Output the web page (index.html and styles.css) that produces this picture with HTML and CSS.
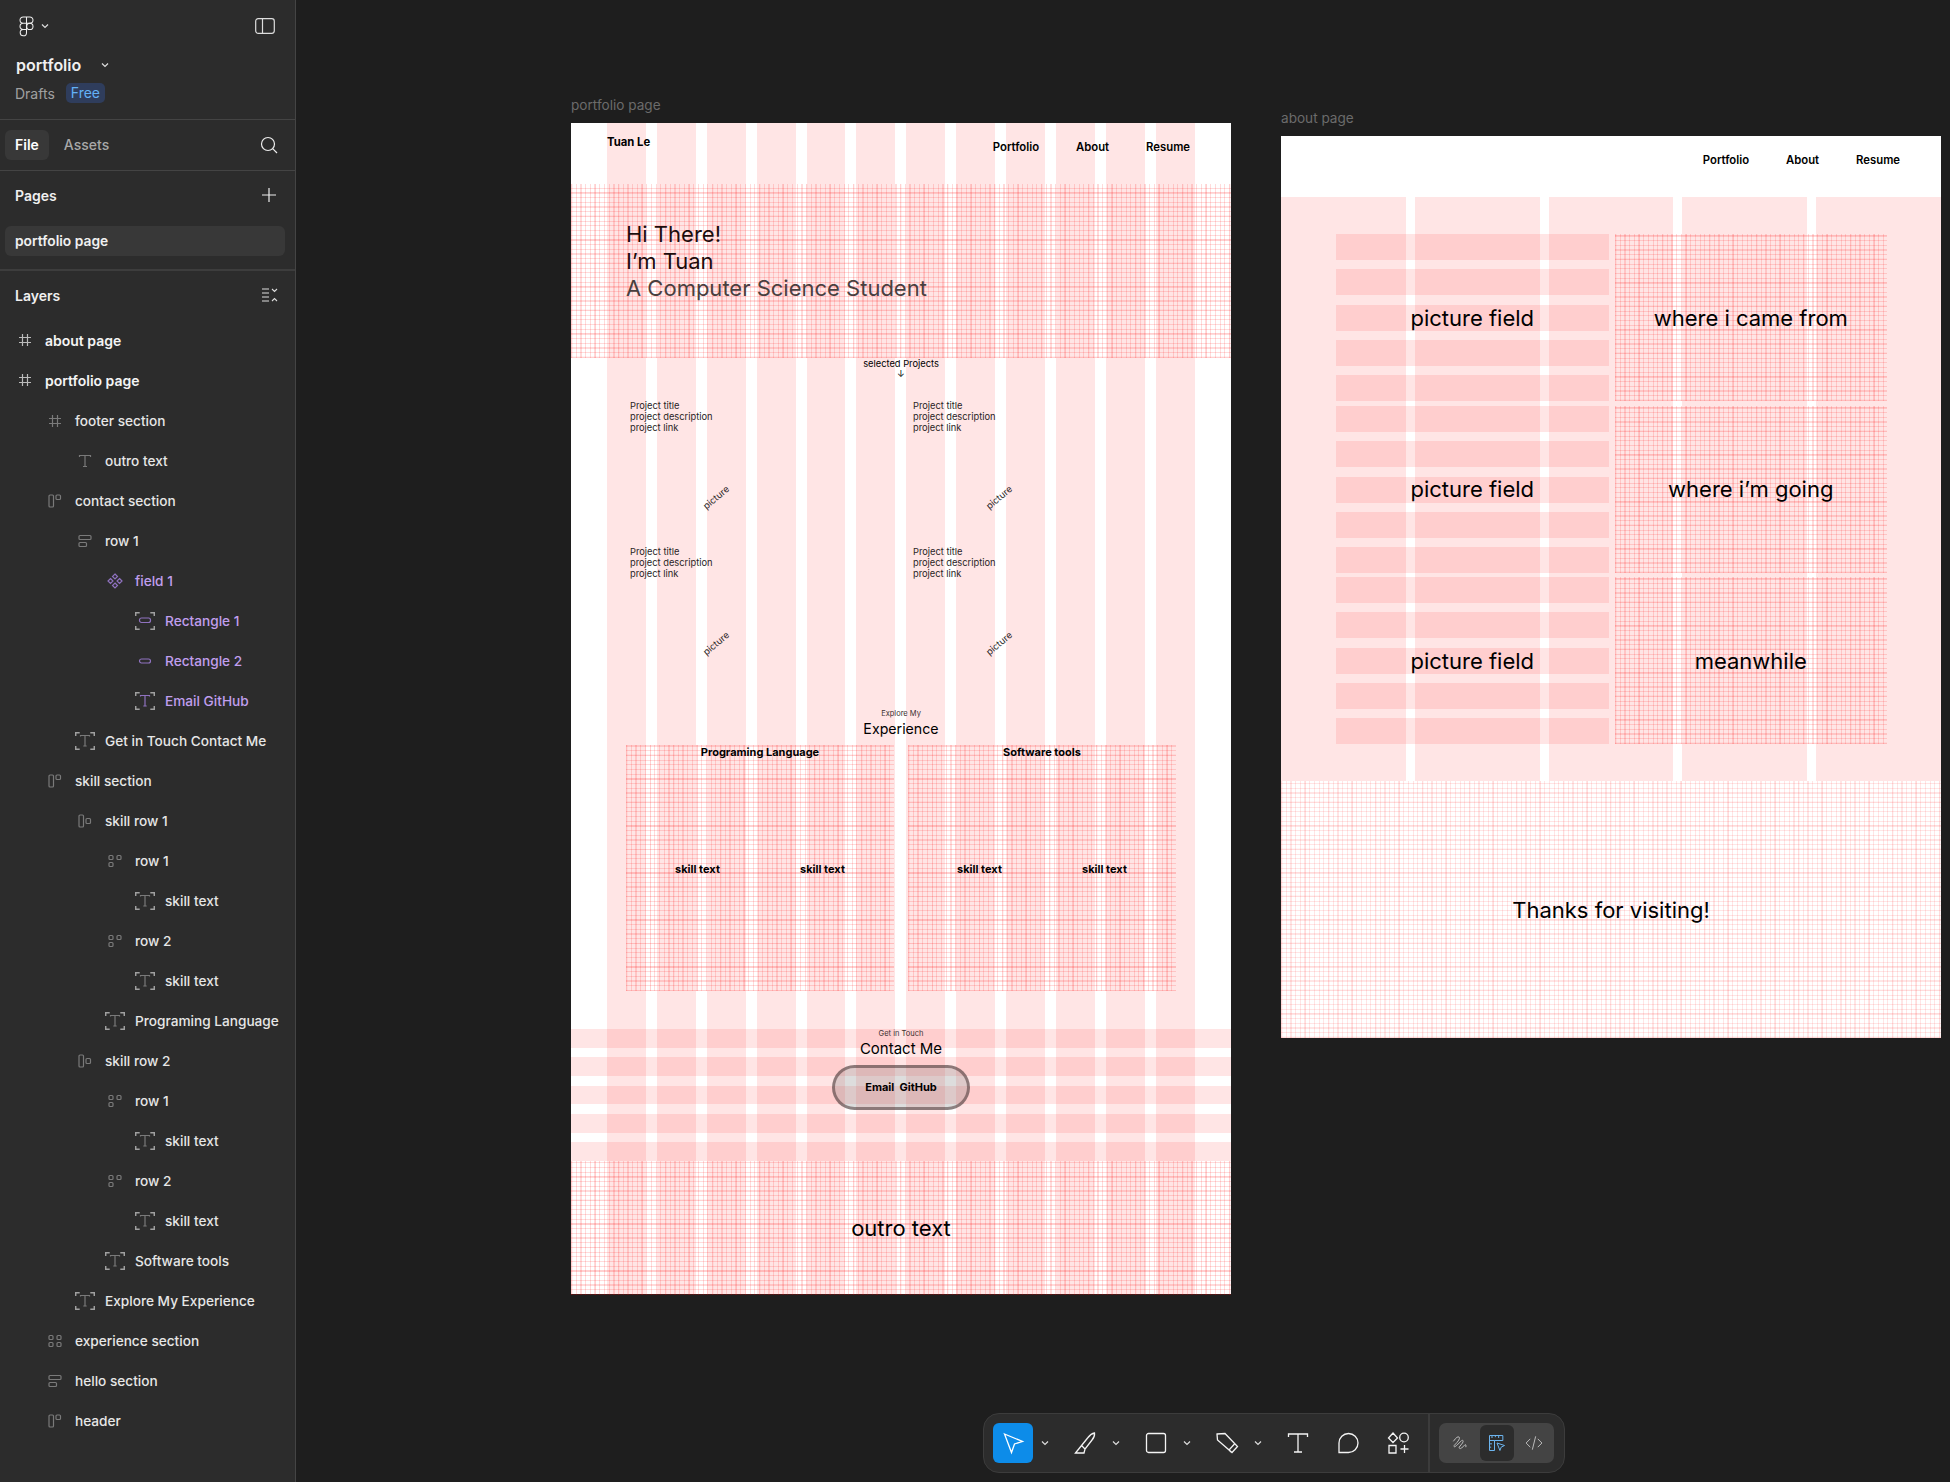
FILE: index.html
```html
<!DOCTYPE html>
<html lang="en">
<head>
    <meta charset="UTF-8">
    <title>portfolio - Figma</title>
    <link rel="stylesheet" href="styles.css">
</head>
<body>
    <svg class="sprite" width="0" height="0">
        <symbol id="i-frame" viewBox="0 0 20 20"><path d="M7.500 4v12M12.500 4v12M4 7.500h12M4 12.500h12"/></symbol>
        <symbol id="i-text" viewBox="0 0 20 20"><path d="M4.500 6V4.500h11V6M10 4.500v11M8 15.500h4"/></symbol>
        <symbol id="i-btext" viewBox="0 0 20 20"><path class="bk" d="M.7 5V1.700h4M15.300 1.700h4V5M.7 15v3.300h4M19.300 15v3.300h-4"/><path d="M5.500 5.500v-1h9v1M10 4.500v10.500M8.300 15h3.400"/></symbol>
        <symbol id="i-hstack" viewBox="0 0 20 20"><rect x="4" y="4" width="4.500" height="12" rx="1"/><rect x="11" y="4" width="4.500" height="4.500" rx="1"/></symbol>
        <symbol id="i-hmid" viewBox="0 0 20 20"><rect x="4" y="4" width="4.500" height="12" rx="1"/><rect x="11" y="7.500" width="4.500" height="5" rx="1"/></symbol>
        <symbol id="i-vstack" viewBox="0 0 20 20"><rect x="4" y="4.500" width="12" height="4" rx="1"/><rect x="4" y="11.500" width="7.500" height="4" rx="1"/></symbol>
        <symbol id="i-grid3" viewBox="0 0 20 20"><rect x="4" y="4.500" width="4" height="4" rx="1"/><rect x="12" y="4.500" width="4" height="4" rx="1"/><rect x="4" y="11.500" width="4" height="4" rx="1"/></symbol>
        <symbol id="i-grid4" viewBox="0 0 20 20"><rect x="4" y="4.500" width="4" height="4" rx="1"/><rect x="12" y="4.500" width="4" height="4" rx="1"/><rect x="4" y="11.500" width="4" height="4" rx="1"/><rect x="12" y="11.500" width="4" height="4" rx="1"/></symbol>
        <symbol id="i-comp" viewBox="0 0 20 20"><path d="M10 3l2.500 2.500L10 8 7.500 5.500zM10 12l2.500 2.500L10 17l-2.500-2.500zM5.500 7.500L8 10l-2.500 2.500L3 10zM14.500 7.500L17 10l-2.500 2.500L12 10z"/></symbol>
        <symbol id="i-brect" viewBox="0 0 20 20"><path class="bk" d="M.7 5V1.700h4M15.300 1.700h4V5M.7 15v3.300h4M19.300 15v3.300h-4"/><rect x="4.500" y="7" width="11" height="4.500" rx="2"/></symbol>
        <symbol id="i-pill" viewBox="0 0 20 20"><rect x="4.500" y="8" width="11" height="4" rx="2"/></symbol>
    </svg>

    <aside class="sidebar">
        <div class="file-head">
            <div class="logo-row">
                <svg class="figma-logo" viewBox="0 0 16 22">
                    <path d="M8 1H4.500a3.300 3.300 0 0 0 0 6.600H8zM8 1h3.500a3.300 3.300 0 0 1 0 6.600H8zM8 7.600H4.500a3.300 3.300 0 0 0 0 6.600H8zM8 14.200H4.500A3.300 3.300 0 1 0 8 17.500z"/>
                    <circle cx="11.500" cy="10.900" r="3.300"/>
                </svg>
                <svg class="chev" viewBox="0 0 8 6"><path d="M1 1.500l3 3 3-3"/></svg>
                <svg class="panel-icon" viewBox="0 0 20 16"><rect x=".7" y=".7" width="18.600" height="14.600" rx="2.500"/><path d="M7.500 .7v14.600"/></svg>
            </div>
            <div class="file-name">portfolio <svg class="chev" viewBox="0 0 8 6"><path d="M1 1.500l3 3 3-3"/></svg></div>
            <div class="file-meta"><span>Drafts</span><span class="badge">Free</span></div>
        </div>

        <div class="tabs">
            <span class="tab active">File</span>
            <span class="tab">Assets</span>
            <svg class="search" viewBox="0 0 18 18"><circle cx="8" cy="8" r="6.500"/><path d="M12.700 12.700l4.300 4.300"/></svg>
        </div>

        <div class="pages">
            <div class="panel-title">Pages <svg class="plus" viewBox="0 0 14 14"><path d="M7 0v14M0 7h14"/></svg></div>
            <div class="page-item">portfolio page</div>
        </div>

        <div class="layers">
            <div class="panel-title">Layers
                <svg class="collapse" viewBox="0 0 16 14"><path d="M0 1h7M0 5h7M0 9h7M0 13h7M10 1l2.500 2.500L15 1M10 13l2.500-2.500L15 13"/></svg>
            </div>
            <ul class="layer-list">
                <li class="layer lv0 top"><svg><use href="#i-frame"/></svg>about page</li>
                <li class="layer lv0 top"><svg><use href="#i-frame"/></svg>portfolio page</li>
                <li class="layer lv1"><svg><use href="#i-frame"/></svg>footer section</li>
                <li class="layer lv2"><svg><use href="#i-text"/></svg>outro text</li>
                <li class="layer lv1"><svg><use href="#i-hstack"/></svg>contact section</li>
                <li class="layer lv2"><svg><use href="#i-vstack"/></svg>row 1</li>
                <li class="layer lv3 purple"><svg><use href="#i-comp"/></svg>field 1</li>
                <li class="layer lv4 purple"><svg><use href="#i-brect"/></svg>Rectangle 1</li>
                <li class="layer lv4 purple"><svg><use href="#i-pill"/></svg>Rectangle 2</li>
                <li class="layer lv4 purple"><svg><use href="#i-btext"/></svg>Email GitHub</li>
                <li class="layer lv2"><svg><use href="#i-btext"/></svg>Get in Touch Contact Me</li>
                <li class="layer lv1"><svg><use href="#i-hstack"/></svg>skill section</li>
                <li class="layer lv2"><svg><use href="#i-hmid"/></svg>skill row 1</li>
                <li class="layer lv3"><svg><use href="#i-grid3"/></svg>row 1</li>
                <li class="layer lv4"><svg><use href="#i-btext"/></svg>skill text</li>
                <li class="layer lv3"><svg><use href="#i-grid3"/></svg>row 2</li>
                <li class="layer lv4"><svg><use href="#i-btext"/></svg>skill text</li>
                <li class="layer lv3"><svg><use href="#i-btext"/></svg>Programing Language</li>
                <li class="layer lv2"><svg><use href="#i-hmid"/></svg>skill row 2</li>
                <li class="layer lv3"><svg><use href="#i-grid3"/></svg>row 1</li>
                <li class="layer lv4"><svg><use href="#i-btext"/></svg>skill text</li>
                <li class="layer lv3"><svg><use href="#i-grid3"/></svg>row 2</li>
                <li class="layer lv4"><svg><use href="#i-btext"/></svg>skill text</li>
                <li class="layer lv3"><svg><use href="#i-btext"/></svg>Software tools</li>
                <li class="layer lv2"><svg><use href="#i-btext"/></svg>Explore My Experience</li>
                <li class="layer lv1"><svg><use href="#i-grid4"/></svg>experience section</li>
                <li class="layer lv1"><svg><use href="#i-vstack"/></svg>hello section</li>
                <li class="layer lv1"><svg><use href="#i-hstack"/></svg>header</li>
            </ul>
        </div>
    </aside>

    <main class="canvas">
        <!-- portfolio frame -->
        <section class="frame frame-portfolio">
            <div class="frame-label">portfolio page</div>
            <header class="site-head">
                <div class="brand">Tuan Le</div>
                <nav class="site-nav"><span>Portfolio</span><span>About</span><span>Resume</span></nav>
            </header>
            <div class="hello fine-grid">
                <div>Hi There!</div>
                <div>I’m Tuan</div>
                <div class="hello-sub">A Computer Science Student</div>
            </div>
            <div class="selected">
                <div>selected Projects</div>
                <div class="arrow">↓</div>
            </div>
            <div class="project-grid">
                <div class="project">
                    <p>Project title<br>project description<br>project link</p>
                    <span class="picture">picture</span>
                </div>
                <div class="project">
                    <p>Project title<br>project description<br>project link</p>
                    <span class="picture">picture</span>
                </div>
                <div class="project">
                    <p>Project title<br>project description<br>project link</p>
                    <span class="picture">picture</span>
                </div>
                <div class="project">
                    <p>Project title<br>project description<br>project link</p>
                    <span class="picture">picture</span>
                </div>
            </div>
            <div class="section-head explore">
                <div class="eyebrow">Explore My</div>
                <div class="section-title">Experience</div>
            </div>
            <div class="skills">
                <div class="skill-panel fine-grid">
                    <h3>Programing Language</h3>
                    <div class="skill-row"><b>skill text</b><b>skill text</b></div>
                </div>
                <div class="skill-panel fine-grid">
                    <h3>Software tools</h3>
                    <div class="skill-row"><b>skill text</b><b>skill text</b></div>
                </div>
            </div>
            <div class="contact">
                <div class="eyebrow">Get in Touch</div>
                <div class="section-title contact-title">Contact Me</div>
                <div class="contact-btn">Email&nbsp; GitHub</div>
            </div>
            <div class="outro fine-grid">outro text</div>
        </section>

        <!-- about frame -->
        <section class="frame frame-about">
            <div class="frame-label">about page</div>
            <header class="site-head">
                <div class="brand"></div>
                <nav class="site-nav"><span>Portfolio</span><span>About</span><span>Resume</span></nav>
            </header>
            <div class="about-main">
                <div class="field rows">picture field</div>
                <div class="field fine-grid">where i came from</div>
                <div class="field rows">picture field</div>
                <div class="field fine-grid">where i’m going</div>
                <div class="field rows">picture field</div>
                <div class="field fine-grid">meanwhile</div>
            </div>
            <div class="thanks fine-grid light">Thanks for visiting!</div>
        </section>

        <div class="toolbar">
            <div class="tool selected-tool">
                <svg viewBox="0 0 24 24"><path d="M3.500 3l18 7.500-8 2.500-3 8.500z"/></svg>
            </div>
            <svg class="chev tool-chev" viewBox="0 0 8 6"><path d="M1 1.500l3 3 3-3"/></svg>
            <div class="tool"><svg viewBox="0 0 24 24"><path d="M2.500 22L15 6.500Q18 2.500 21.500 2q.5 3.500-2.500 7L12 18l-1 4zM12 18l-3-3"/></svg></div>
            <svg class="chev tool-chev" viewBox="0 0 8 6"><path d="M1 1.500l3 3 3-3"/></svg>
            <div class="tool"><svg viewBox="0 0 24 24"><rect x="2.500" y="2.500" width="19" height="19" rx="2"/></svg></div>
            <svg class="chev tool-chev" viewBox="0 0 8 6"><path d="M1 1.500l3 3 3-3"/></svg>
            <div class="tool"><svg viewBox="0 0 24 24"><path d="M2 3l8-.5L22.500 15.500 17 21.500 2.500 9zM16 21l-2-2 5.500-6"/></svg></div>
            <svg class="chev tool-chev" viewBox="0 0 8 6"><path d="M1 1.500l3 3 3-3"/></svg>
            <div class="tool"><svg viewBox="0 0 24 24"><path d="M2.500 6V3h19v3M12 3v18M8 21h8"/></svg></div>
            <div class="tool spaced"><svg viewBox="0 0 24 24"><path d="M3 21.500V12a9.500 9.500 0 1 1 9.500 9.500z"/></svg></div>
            <div class="tool spaced"><svg viewBox="0 0 24 24"><path d="M7 2l4.500 5L7 11.500 2.500 7zM3 14.500h7v7.500H3zM14.500 18h8M18.500 14v8"/><circle cx="18" cy="6.500" r="4.300"/></svg></div>
            <div class="tool-sep"></div>
            <div class="modes">
                <div class="mode"><svg viewBox="0 0 24 24"><path d="M4 10Q9 3 11 5T5 15q-1 3 3 0l6-6q3-1 1 3l-4 5q0 3 3 1l4-4q2 0 1 3"/></svg></div>
                <div class="mode active"><svg viewBox="0 0 24 24"><path d="M3 3h16v6H9v12H3zM3 9h6M6 3v3M10 3v2M14 3v3M3 13h3M3 17h2"/><path d="M12 12l9 3-4 2-1.500 4z"/></svg></div>
                <div class="mode"><svg viewBox="0 0 24 24"><path d="M7.500 7L2.500 12l5 5M16.500 7l5 5-5 5M14 4l-4 16"/></svg></div>
            </div>
        </div>
    </main>
</body>
</html>
```

FILE: styles.css
```css
* {
    box-sizing: border-box;
}
html, body {
    height: 100%;
}
body {
    margin: 0;
    display: flex;
    overflow: hidden;
    font-family: Inter, "Liberation Sans", sans-serif;
    background: #1e1e1e;
    color: #000;
}
.sprite {
    position: absolute;
}
svg {
    fill: none;
    stroke: currentColor;
}

/* left panel */
.sidebar {
    width: 296px;
    height: 1482px;
    flex: none;
    background: #2c2c2c;
    border-right: 1px solid #444;
    color: #f0f0f0;
    font-size: 14px;
}
.file-head {
    height: 120px;
    padding: 16px 16px 0;
    border-bottom: 1px solid #444;
}
.logo-row {
    display: flex;
    align-items: center;
    height: 20px;
    padding-left: 2px;
    padding-right: 4px;
}
.figma-logo {
    width: 17px;
    height: 21px;
    stroke: #eee;
    stroke-width: 1.100;
}
.chev {
    width: 8px;
    height: 6px;
    stroke: #ddd;
    stroke-width: 1.200;
}
.logo-row .chev {
    margin-left: 6px;
}
.panel-icon {
    width: 20px;
    height: 16px;
    margin-left: auto;
    stroke: #ddd;
    stroke-width: 1.200;
}
.file-name {
    margin-top: 19px;
    font-size: 16px;
    font-weight: 600;
    line-height: 20px;
    display: flex;
    align-items: center;
}
.file-name .chev {
    margin-left: 20px;
}
.file-meta {
    margin-top: 8px;
    margin-left: -1px;
    display: flex;
    align-items: center;
    gap: 11px;
    color: #a0a0a0;
    font-size: 14px;
}
.badge {
    background: #2f3d5c;
    color: #63b1f7;
    border-radius: 5px;
    padding: 0 5px;
    line-height: 20px;
    height: 20px;
}
.tabs {
    height: 51px;
    display: flex;
    align-items: center;
    padding: 0 17px 0 5px;
    border-bottom: 1px solid #444;
    color: #a8a8a8;
    font-weight: 500;
}
.tab {
    padding: 0 10px;
    line-height: 30px;
    border-radius: 6px;
    margin-right: 5px;
}
.tab.active {
    background: #383838;
    color: #fff;
    font-weight: 600;
}
.search {
    width: 18px;
    height: 18px;
    margin-left: auto;
    stroke: #eee;
    stroke-width: 1.200;
}
.pages {
    height: 100px;
    padding: 0 10px 0 5px;
    border-bottom: 2px solid #3d3d3d;
}
.panel-title {
    height: 48px;
    display: flex;
    align-items: center;
    justify-content: space-between;
    padding: 0 9px 0 10px;
    font-weight: 600;
}
.plus {
    width: 14px;
    height: 14px;
    stroke: #eee;
    stroke-width: 1.200;
}
.page-item {
    margin-top: 7px;
    height: 30px;
    line-height: 30px;
    padding-left: 10px;
    background: #383838;
    border-radius: 6px;
    font-weight: 600;
    font-size: 13.800px;
}
.layers .panel-title {
    padding: 0 17px 0 15px;
}
.collapse {
    width: 16px;
    height: 14px;
    stroke: #ddd;
    stroke-width: 1.100;
}
.layer-list {
    list-style: none;
    margin: 1px 0 0;
    padding: 0;
}
.layer {
    height: 40px;
    padding-top: 2px;
    display: flex;
    align-items: center;
    color: #e6e6e6;
    font-size: 13.650px;
    font-weight: 450;
    white-space: nowrap;
}
.layer svg {
    width: 20px;
    height: 20px;
    margin-right: 10px;
    flex: none;
    color: #7a7a7a;
    stroke-width: 1.200;
}
.bk {
    stroke: #a0a0a0;
    stroke-width: 1.500;
}
.lv0 { padding-left: 15px; }
.lv1 { padding-left: 45px; }
.lv2 { padding-left: 75px; }
.lv3 { padding-left: 105px; }
.lv4 { padding-left: 135px; }
.layer.top {
    padding-top: 0;
    font-size: 14px;
    font-weight: 600;
    color: #f4f4f4;
}
.layer.top svg {
    color: #bbb;
}
.layer.purple {
    color: #c09eee;
}
.layer.purple svg {
    color: #8f72bf;
}
.purple .bk {
    stroke: #a283d6;
}

/* canvas */
.canvas {
    position: relative;
    flex: 1;
    height: 1482px;
}
.frame {
    position: absolute;
    width: 660px;
    background-color: #fff;
}
.frame-portfolio {
    left: 275px;
    top: 123px;
    height: 1171px;
    background-image: repeating-linear-gradient(90deg, rgba(255, 0, 0, .1) 0 38.9px, transparent 38.9px 49.9px);
    background-position: 36px 0;
    background-size: 588px 100%;
    background-repeat: no-repeat;
}
.frame-about {
    left: 985px;
    top: 136px;
    height: 902px;
}
.frame-label {
    position: absolute;
    top: -27px;
    left: 0;
    color: #6b6b6b;
    font-size: 13.600px;
    line-height: 18px;
}
.fine-grid {
    background-image:
        repeating-linear-gradient(90deg, rgba(255, 0, 0, .05) 0 1.500px, transparent 1.500px 23.500px),
        repeating-linear-gradient(0deg, rgba(255, 0, 0, .05) 0 1.500px, transparent 1.500px 23.500px),
        repeating-linear-gradient(90deg, rgba(255, 0, 0, .14) 0 1.200px, transparent 1.200px 4.700px),
        repeating-linear-gradient(0deg, rgba(255, 0, 0, .14) 0 1.200px, transparent 1.200px 4.700px);
}
.fine-grid.light {
    background-image:
        repeating-linear-gradient(90deg, rgba(255, 0, 0, .04) 0 1.500px, transparent 1.500px 23.500px),
        repeating-linear-gradient(0deg, rgba(255, 0, 0, .04) 0 1.500px, transparent 1.500px 23.500px),
        repeating-linear-gradient(90deg, rgba(255, 0, 0, .1) 0 1.200px, transparent 1.200px 4.700px),
        repeating-linear-gradient(0deg, rgba(255, 0, 0, .1) 0 1.200px, transparent 1.200px 4.700px);
}
.site-head {
    height: 61px;
    display: flex;
    justify-content: space-between;
    padding: 12px 41px 0 36px;
    font-size: 11.300px;
    font-weight: 700;
}
.brand {
    line-height: 14px;
}
.site-nav {
    display: flex;
    gap: 37px;
    line-height: 14px;
    margin-top: 5px;
    font-weight: 600;
}
.hello {
    height: 174px;
    padding: 37px 0 0 55px;
    font-size: 22px;
    line-height: 27px;
    color: #1c0c0c;
}
.hello-sub {
    color: #4a3f3f;
}
.selected {
    height: 26px;
    text-align: center;
    font-size: 9.300px;
    line-height: 12px;
}
.arrow {
    line-height: 8px;
}
.project-grid {
    display: grid;
    grid-template-columns: 283px 283px;
    grid-auto-rows: 145.500px;
    padding: 16px 0 0 59px;
}
.project {
    font-size: 9.300px;
    line-height: 11px;
    color: #2a1f1f;
}
.project p {
    margin: 0;
}
.picture {
    display: block;
    width: 36px;
    margin: 57px 0 0 70px;
    transform: rotate(-40deg);
    white-space: nowrap;
}
.section-head,
.contact {
    text-align: center;
}
.explore {
    margin-top: 18px;
    height: 36px;
}
.eyebrow {
    font-size: 7.500px;
    line-height: 10px;
    color: #3a3030;
}
.section-title {
    font-size: 14.200px;
    line-height: 19px;
}
.contact-title {
    font-size: 15px;
}
.skills {
    display: flex;
    gap: 14px;
    padding-left: 55px;
    margin-bottom: 38px;
}
.skill-panel {
    width: 268px;
    height: 246px;
    display: flex;
    flex-direction: column;
    padding: 0 9px 12px;
    font-size: 11px;
}
.skill-panel h3 {
    margin: 0;
    font-size: 11px;
    font-weight: 700;
    text-align: center;
    line-height: 14px;
}
.skill-row {
    flex: 1;
    display: grid;
    grid-template-columns: 1fr 1fr;
    align-items: center;
    text-align: center;
}
.contact {
    height: 132px;
    background-image: repeating-linear-gradient(180deg, rgba(255, 0, 0, .1) 0 18.800px, transparent 18.800px 28.300px);
}
.contact-btn {
    width: 138px;
    height: 45px;
    margin: 7px auto 0;
    border: 3px solid rgba(60, 40, 40, .5);
    border-radius: 23px;
    background: rgba(120, 120, 120, .25);
    font-size: 11px;
    font-weight: 700;
    line-height: 39px;
}
.outro {
    height: 134px;
    text-align: center;
    font-size: 22px;
    line-height: 134px;
}

/* about page */
.about-main {
    height: 584px;
    padding: 37px 55px 0;
    display: grid;
    grid-template-columns: 272.500px 272.500px;
    grid-auto-rows: 167px;
    gap: 4.500px 6px;
    background-image: repeating-linear-gradient(90deg, rgba(255, 0, 0, .1) 0 124.800px, transparent 124.800px 133.800px);
}
.field {
    display: flex;
    align-items: center;
    justify-content: center;
    font-size: 22px;
}
.field.rows {
    background-image: repeating-linear-gradient(180deg, rgba(255, 0, 0, .1) 0 26px, transparent 26px 35.250px);
}
.thanks {
    height: 257px;
    display: flex;
    align-items: center;
    justify-content: center;
    font-size: 22px;
}

/* bottom toolbar */
.toolbar {
    position: absolute;
    left: 687px;
    top: 1413px;
    width: 582px;
    height: 60px;
    display: flex;
    align-items: center;
    padding: 0 9px;
    background: #2c2c2c;
    border: 1px solid #3c3c3c;
    border-radius: 16px;
}
.tool {
    width: 40px;
    height: 40px;
    flex: none;
    display: flex;
    align-items: center;
    justify-content: center;
    color: #f4f4f4;
    border-radius: 6px;
}
.tool.spaced {
    margin-left: 10px;
}
.tool svg {
    width: 24px;
    height: 24px;
    stroke-width: 1.300;
}
.selected-tool {
    background: #0d8ce9;
    color: #fff;
    margin-right: 1px;
}
.tool-chev {
    margin: 0 16px 0 7px;
    flex: none;
}
.tool-sep {
    width: 2px;
    height: 58px;
    background: #3c3c3c;
    margin-left: 10px;
}
.modes {
    margin-left: 9px;
    width: 115px;
    height: 40px;
    display: flex;
    align-items: center;
    justify-content: center;
    gap: 3px;
    background: #444;
    border-radius: 7px;
    color: #bbb;
}
.mode {
    width: 34px;
    height: 36px;
    display: flex;
    align-items: center;
    justify-content: center;
    border-radius: 6px;
}
.mode svg {
    width: 20px;
    height: 20px;
    stroke-width: 1.200;
}
.mode.active {
    background: #2c2c2c;
    color: #6cb4ee;
}
```
